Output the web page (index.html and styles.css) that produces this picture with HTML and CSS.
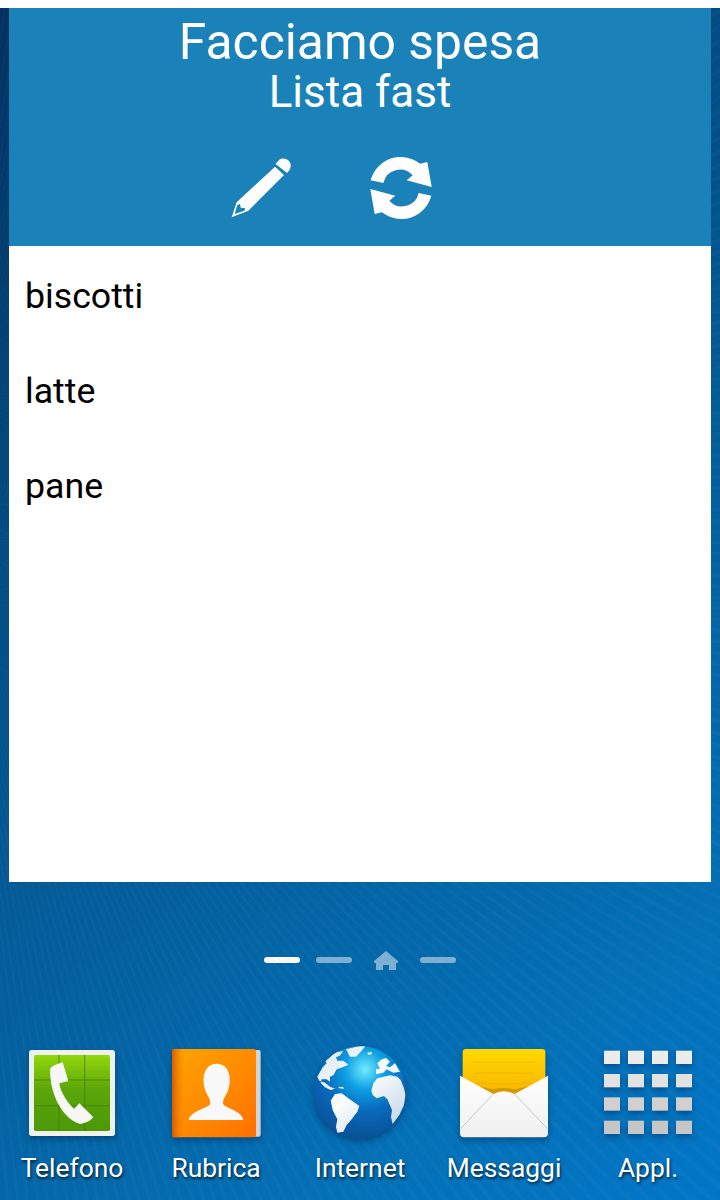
FILE: index.html
```html
<!DOCTYPE html>
<html lang="it">
<head>
<meta charset="utf-8">
<title>Facciamo spesa</title>
<link rel="stylesheet" href="styles.css">
</head>
<body>
<div class="topline"></div>
<section class="widget">
  <header class="widget-head">
    <h1 class="title">Facciamo spesa</h1>
    <h2 class="subtitle">Lista fast</h2>
    <div class="tools">
      <svg class="tool" viewBox="30 51 186 186">
        <path fill="#fff" fill-rule="evenodd" d="M35 232 L50 187 L165 80 L192 105 L85 212 Z M52 195 L44 222 L73 212 L76 205 L62 203 L60 192 Z"/>
        <path fill="#fff" d="M167 72 L178 59 Q188 52 200 58 Q214 66 212 80 Q211 90 201 99 Z"/>
      </svg>
      <svg class="tool" viewBox="450 50 186 186">
        <path id="arrow" fill="#fff" d="M452 120 A93 93 0 0 1 600 70 L622 65 L635 140 L560 120 L578 105 A51 51 0 0 0 490 128 Z"/>
        <use href="#arrow" transform="rotate(180 543 143)"/>
      </svg>
    </div>
  </header>
  <ul class="items">
    <li class="item">biscotti</li>
    <li class="item">latte</li>
    <li class="item">pane</li>
  </ul>
</section>
<nav class="pager">
  <span class="dash dash-on"></span>
  <span class="dash"></span>
  <svg class="home" viewBox="0 0 36 20"><path fill="#7fb0d4" d="M18 1 L30 11 V13 H28 V20 H21 V15 H15 V20 H8 V13 H6 V11 Z"/></svg>
  <span class="dash"></span>
</nav>
<footer class="dock">
  <div class="app">
    <svg class="icon" viewBox="72 42 288 288">
      <defs>
        <linearGradient id="gGreen" x1="0" y1="0" x2="0" y2="1"><stop offset="0" stop-color="#93d70e"/><stop offset=".45" stop-color="#5ca709"/><stop offset="1" stop-color="#4c9807"/></linearGradient>
        <linearGradient id="gOrange" x1="0" y1="0" x2="1" y2="1"><stop offset="0" stop-color="#ffa600"/><stop offset="1" stop-color="#ff7000"/></linearGradient>
        <linearGradient id="gSpine" x1="0" y1="0" x2="1" y2="0"><stop offset="0" stop-color="#d55c00"/><stop offset="1" stop-color="#ff8a00" stop-opacity="0"/></linearGradient>
        <radialGradient id="gGlobe" gradientUnits="userSpaceOnUse" cx="255" cy="118" r="215"><stop offset="0" stop-color="#6fecfc"/><stop offset=".28" stop-color="#0e9fe3"/><stop offset=".58" stop-color="#0869bd"/><stop offset="1" stop-color="#0a4f94"/></radialGradient>
        <linearGradient id="gLand" gradientUnits="userSpaceOnUse" x1="120" y1="60" x2="340" y2="310"><stop offset="0" stop-color="#dfeaf4"/><stop offset=".5" stop-color="#fafcfd"/><stop offset="1" stop-color="#c4d6e8"/></linearGradient>
        <linearGradient id="gLetter" x1="0" y1="0" x2="0" y2="1"><stop offset="0" stop-color="#ffd900"/><stop offset="1" stop-color="#f8b400"/></linearGradient>
        <linearGradient id="gEnv" x1="0" y1="0" x2="0" y2="1"><stop offset="0" stop-color="#fff"/><stop offset="1" stop-color="#efefef"/></linearGradient>
        <clipPath id="cGlobe"><circle cx="240" cy="187" r="139"/></clipPath>
      </defs>
      <rect x="87" y="60" width="258" height="258" rx="8" fill="#f1f1ec"/>
      <rect x="102" y="75" width="228" height="228" rx="5" fill="url(#gGreen)"/>
      <path fill="none" stroke="#447f06" stroke-width="2.5" d="M177 75 V303 M254 75 V303 M102 150 H330 M102 227 H330"/>
      <path fill="#f7f7f5" d="M150 118 Q152 108 188 97 L205 153 L178 160 C182 190 205 220 222 237 L238 220 L280 262 Q268 278 240 282 C200 272 150 210 150 118 Z"/>
    </svg>
    <span class="label">Telefono</span>
  </div>
  <div class="app">
    <svg class="icon" viewBox="504 42 288 288">
      <rect x="700" y="60" width="82" height="260" rx="6" fill="#d4d4d4"/>
      <rect x="516" y="57" width="252" height="265" rx="8" fill="url(#gOrange)"/>
      <rect x="516" y="57" width="40" height="265" rx="6" fill="url(#gSpine)"/>
      <path fill="#f8f8f8" d="M566 270 C570 248 604 240 628 226 C634 218 630 208 624 198 C606 168 606 128 625 110 C638 98 662 98 675 110 C694 128 694 168 676 198 C670 208 666 218 672 226 C696 240 726 248 730 270 Z"/>
    </svg>
    <span class="label">Rubrica</span>
  </div>
  <div class="app">
    <svg class="icon" viewBox="96 42 288 288">
      <circle cx="240" cy="187" r="139" fill="url(#gGlobe)"/>
      <g clip-path="url(#cGlobe)" fill="url(#gLand)">
        <path d="M118 152 L112 140 L128 112 L140 100 L135 92 L150 82 L165 66 L190 64 L178 78 L168 82 L172 92 L190 92 L205 104 L188 112 L170 118 L160 136 L150 140 L150 155 L140 148 L125 148 L122 158 L135 172 L152 180 L165 176 L150 170 L135 158 Z"/>
        <path d="M152 212 L165 192 L185 190 L205 205 L238 228 L232 245 L215 268 L200 285 L190 305 L172 308 L168 290 L172 268 L158 240 Z"/>
        <path d="M274 182 L280 160 L292 145 L330 136 L352 140 L362 150 L372 175 L376 195 L372 225 L358 255 L338 282 L333 262 L336 240 L322 208 L312 198 L290 205 L278 195 Z"/>
        <path d="M288 132 L288 118 L300 116 L292 100 L305 88 L318 84 L330 95 L318 108 L330 112 L345 100 L360 125 L340 128 L320 118 L310 128 Z"/>
        <path d="M198 58 L230 50 L256 48 L245 62 L228 80 L210 80 Z M262 68 L275 66 L275 73 L264 74 Z M175 170 L190 172 L192 176 L178 175 Z"/>
      </g>
    </svg>
    <span class="label">Internet</span>
  </div>
  <div class="app">
    <svg class="icon" viewBox="48 42 288 288">
      <path fill="url(#gLetter)" d="M68 200 V67 Q68 57 78 57 H306 Q316 57 316 67 V200 Z"/>
      <path fill="none" stroke="#e9b000" stroke-width="2" d="M100 97 H285 M100 129 H285 M100 161 H285"/>
      <path fill="#d49a00" d="M110 168 L160 178 Q190 170 224 178 L274 168 L224 200 H160 Z"/>
      <path fill="url(#gEnv)" d="M60 137 L160 192 Q190 176 224 192 L324 137 V310 Q324 322 312 322 H72 Q60 322 60 310 Z"/>
      <path fill="none" stroke="#c9c9c9" stroke-width="3" d="M62 296 L160 192 M224 192 L322 296"/>
    </svg>
    <span class="label">Messaggi</span>
  </div>
  <div class="app">
    <svg class="icon" viewBox="480 42 288 288">
      <g fill="#ececec">
        <rect x="492" y="62" width="48" height="40"/><rect x="564" y="62" width="48" height="40"/><rect x="636" y="62" width="48" height="40"/><rect x="708" y="62" width="48" height="40"/>
      </g>
      <g fill="#e2e2e2">
        <rect x="492" y="132" width="48" height="40"/><rect x="564" y="132" width="48" height="40"/><rect x="636" y="132" width="48" height="40"/><rect x="708" y="132" width="48" height="40"/>
      </g>
      <g fill="#d0d0d0">
        <rect x="492" y="202" width="48" height="40"/><rect x="564" y="202" width="48" height="40"/><rect x="636" y="202" width="48" height="40"/><rect x="708" y="202" width="48" height="40"/>
      </g>
      <g fill="#c6c6c6">
        <rect x="492" y="272" width="48" height="40"/><rect x="564" y="272" width="48" height="40"/><rect x="636" y="272" width="48" height="40"/><rect x="708" y="272" width="48" height="40"/>
      </g>
    </svg>
    <span class="label">Appl.</span>
  </div>
</footer>
</body>
</html>
```
FILE: styles.css
```css
* { box-sizing: border-box; }
html, body { margin: 0; padding: 0; }
body {
  height: 1200px;
  overflow: hidden;
  font-family: Roboto, sans-serif;
  background:
    repeating-conic-gradient(from 0deg at -59px 503px, rgba(255,255,255,.02) 0deg .25deg, transparent .25deg .8deg),
    linear-gradient(144deg, #03305f 0%, #034a80 30%, #045a96 52%, #0470b6 83%, #0276c8 100%);
}
.topline { height: 8px; background: #fff; }
.widget { margin: 0 9px; height: 874px; background: #fff; }
.widget-head { height: 238px; background: #1a82b8; color: #fff; text-align: center; padding-top: 8px; }
.title { margin: 0; font-size: 49.8px; line-height: 52px; font-weight: 400; }
.subtitle { margin: 0; font-size: 44px; line-height: 48px; font-weight: 400; }
.tools { display: flex; gap: 78px; padding: 41px 0 0 221px; }
.tool { width: 62px; height: 62px; display: block; overflow: visible; }
.items { list-style: none; margin: 0; padding: 0; }
.item { height: 95px; padding: 29px 0 0 16px; font-size: 35.7px; line-height: 42px; color: #000; }
.pager { display: flex; justify-content: center; align-items: center; gap: 16px; height: 20px; margin-top: 68px; }
.dash { width: 36px; height: 6px; border-radius: 3px; background: #7fb0d4; }
.dash-on { background: #f7f7f7; }
.home { width: 36px; height: 20px; }
.dock { display: grid; grid-template-columns: repeat(5, 144px); margin-top: 74px; }
.app { display: flex; flex-direction: column; align-items: center; }
.icon { width: 96px; height: 96px; display: block; filter: drop-shadow(0 3px 3px rgba(0,30,70,.45)); }
.label { margin-top: 12px; font-size: 26.4px; line-height: 32px; color: #fff; text-shadow: 1px 2px 3px rgba(0,0,0,.7); }
```
